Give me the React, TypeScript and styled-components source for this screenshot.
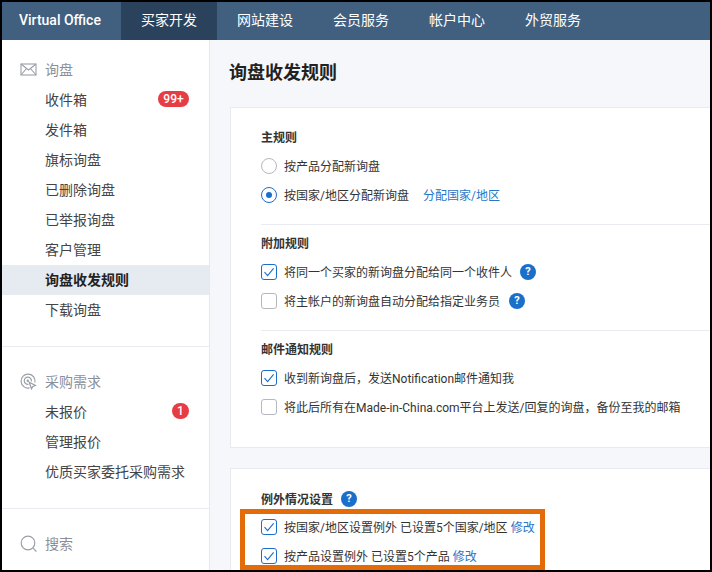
import React from "react";
import styled, { createGlobalStyle } from "styled-components";

const GlobalStyle = createGlobalStyle`
  html, body {
    margin: 0;
    padding: 0;
    background: #000;
  }
  body {
    font-family: Roboto, "Noto Sans CJK SC", sans-serif;
    color: #333;
  }
`;

const Frame = styled.div`
  width: 712px;
  height: 572px;
  box-sizing: border-box;
  border: 2px solid #000;
  overflow: hidden;
  display: flex;
  flex-direction: column;
  background: #f5f7fb;
`;

const TopBar = styled.div`
  height: 38px;
  flex: none;
  display: flex;
  background: #41607f;
`;

const Brand = styled.div`
  width: 119px;
  padding-left: 17px;
  box-sizing: border-box;
  font-size: 14px;
  font-weight: 500;
  line-height: 36px;
  color: #fff;
`;

const NavItem = styled.div<{ $active?: boolean }>`
  padding: 0 20px;
  font-size: 14px;
  line-height: 36px;
  color: #fff;
  background: ${(p) => (p.$active ? "#2b425c" : "transparent")};
`;

const Body = styled.div`
  flex: 1;
  min-height: 0;
  display: flex;
`;

const Sidebar = styled.div`
  width: 207px;
  flex: none;
  background: #fff;
  border-right: 1px solid #e6e8ef;
`;

const SideGroup = styled.div<{ $top: number; $bottom: number }>`
  padding: ${(p) => p.$top}px 0 ${(p) => p.$bottom}px;
  border-bottom: 1px solid #e9ebf0;

  &:last-child {
    border-bottom: none;
  }
`;

const GroupHead = styled.div`
  height: 30px;
  box-sizing: border-box;
  display: flex;
  align-items: center;
  padding: 0 0 2px 18px;
  gap: 8px;
  font-size: 14px;
  color: #8a8f99;

  svg {
    width: 17px;
    height: 17px;
    flex: none;
    color: #9a9ea6;
  }
`;

const SideItem = styled.div<{ $active?: boolean }>`
  height: 30px;
  box-sizing: border-box;
  display: flex;
  align-items: center;
  justify-content: space-between;
  padding: 0 20px 2px 43px;
  font-size: 14px;
  color: ${(p) => (p.$active ? "#222" : "#444")};
  font-weight: ${(p) => (p.$active ? 700 : 400)};
  background: ${(p) => (p.$active ? "#e6ebf1" : "transparent")};
`;

const Badge = styled.span<{ $wide?: boolean }>`
  width: ${(p) => (p.$wide ? "31px" : "17px")};
  height: 16px;
  border-radius: 9px;
  background: #e63c44;
  color: #fff;
  font-size: 12px;
  font-weight: 500;
  line-height: 16px;
  text-align: center;
`;

const Main = styled.div`
  flex: 1;
  min-width: 0;
  padding-left: 20px;
`;

const Title = styled.h1`
  margin: 0 0 0 -1px;
  height: 67px;
  font-size: 18px;
  font-weight: 700;
  line-height: 65px;
  color: #222;
`;

const Card = styled.div`
  background: #fff;
  border: 1px solid #e8eaf0;
  border-right: none;
  padding-left: 30px;
  margin-bottom: 20px;
`;

const Section = styled.div<{ $top: number; $bottom: number }>`
  padding: ${(p) => p.$top}px 0 ${(p) => p.$bottom}px;
  border-bottom: 1px solid #e9ebf0;

  &:last-child {
    border-bottom: none;
  }
`;

const SectionTitle = styled.div`
  display: flex;
  align-items: center;
  gap: 8px;
  height: 29px;
  font-size: 12px;
  font-weight: 700;
  color: #333;
`;

const Row = styled.div`
  height: 29px;
  display: flex;
  align-items: center;
  font-size: 12px;
  color: #333;
  white-space: nowrap;
`;

const Radio = styled.span<{ $on?: boolean }>`
  width: 16px;
  height: 16px;
  box-sizing: border-box;
  margin-right: 7px;
  border-radius: 50%;
  border: 1px solid ${(p) => (p.$on ? "#1a6fc9" : "#b5b8bf")};
  display: flex;
  align-items: center;
  justify-content: center;
  flex: none;

  &::after {
    content: "";
    display: ${(p) => (p.$on ? "block" : "none")};
    width: 6px;
    height: 6px;
    border-radius: 50%;
    background: #1a6fc9;
  }
`;

const CheckBox = styled.span<{ $on?: boolean }>`
  width: 16px;
  height: 16px;
  box-sizing: border-box;
  margin-right: 7px;
  border-radius: 3px;
  border: 1px solid ${(p) => (p.$on ? "#1a6fc9" : "#b5b8bf")};
  display: flex;
  align-items: center;
  justify-content: center;
  flex: none;

  svg {
    width: 12px;
    height: 12px;
    color: #1a6fc9;
  }
`;

const TextLink = styled.a<{ $gap: number }>`
  margin-left: ${(p) => p.$gap}px;
  color: #2a75c7;
`;

const Help = styled.span<{ $gap: number }>`
  width: 16px;
  height: 16px;
  flex: none;
  margin-left: ${(p) => p.$gap}px;
  border-radius: 50%;
  background: #1a6fc9;
  color: #fff;
  font-size: 11px;
  font-weight: 700;
  line-height: 16px;
  text-align: center;
`;

const Highlight = styled.div`
  margin: -4px 0 0 -21px;
  width: 305px;
  height: 61px;
  box-sizing: border-box;
  border: 5px solid #e36c09;
  padding-left: 16px;

  & > :first-child {
    margin-top: -2px;
  }
`;

const Check = () => (
  <svg viewBox="0 0 12 12" fill="none" stroke="currentColor" strokeWidth="1.1">
    <path d="M1.5 6.2 4.6 9.6 10.6 2.4" />
  </svg>
);

const MailIcon = () => (
  <svg viewBox="0 0 17 17" fill="none" stroke="currentColor" strokeWidth="1.1">
    <rect x="1" y="3" width="15" height="11" />
    <path d="M1 3l7.5 6L16 3M1 14l5.5-6.5M16 14l-5.5-6.5" />
  </svg>
);

const TargetIcon = () => (
  <svg viewBox="0 0 17 17" fill="none" stroke="currentColor" strokeWidth="1.2">
    <path d="M9.5 14.9A7 7 0 1 1 14.9 9.5" />
    <path d="M8.4 11.3A3.6 3.6 0 1 1 11.4 8.4" />
    <circle cx="7.8" cy="7.8" r="1.2" fill="currentColor" stroke="none" />
    <path d="M9.2 9.2l2.3 6.6 1.3-2.4 2.6-.9z" fill="#fff" />
  </svg>
);

const SearchIcon = () => (
  <svg viewBox="0 0 17 17" fill="none" stroke="currentColor" strokeWidth="1.2">
    <circle cx="8" cy="8" r="6.8" />
    <path d="M12.9 12.9 16.4 16.6" />
  </svg>
);

const navItems = ["网站建设", "会员服务", "帐户中心", "外贸服务"];
const inquiryItems = ["发件箱", "旗标询盘", "已删除询盘", "已举报询盘", "客户管理"];

export default function App() {
  return (
    <>
      <GlobalStyle />
      <Frame>
        <TopBar>
          <Brand>Virtual Office</Brand>
          <NavItem $active>买家开发</NavItem>
          {navItems.map((item) => (
            <NavItem key={item}>{item}</NavItem>
          ))}
        </TopBar>
        <Body>
          <Sidebar>
            <SideGroup $top={15} $bottom={21}>
              <GroupHead>
                <MailIcon />
                询盘
              </GroupHead>
              <SideItem>
                收件箱
                <Badge $wide>99+</Badge>
              </SideItem>
              {inquiryItems.map((item) => (
                <SideItem key={item}>{item}</SideItem>
              ))}
              <SideItem $active>询盘收发规则</SideItem>
              <SideItem>下载询盘</SideItem>
            </SideGroup>
            <SideGroup $top={20} $bottom={21}>
              <GroupHead>
                <TargetIcon />
                采购需求
              </GroupHead>
              <SideItem>
                未报价
                <Badge>1</Badge>
              </SideItem>
              <SideItem>管理报价</SideItem>
              <SideItem>优质买家委托采购需求</SideItem>
            </SideGroup>
            <SideGroup $top={20} $bottom={0}>
              <GroupHead>
                <SearchIcon />
                搜索
              </GroupHead>
            </SideGroup>
          </Sidebar>
          <Main>
            <Title>询盘收发规则</Title>
            <Card>
              <Section $top={14} $bottom={15}>
                <SectionTitle>主规则</SectionTitle>
                <Row>
                  <Radio />
                  按产品分配新询盘
                </Row>
                <Row>
                  <Radio $on />
                  按国家/地区分配新询盘
                  <TextLink $gap={14}>分配国家/地区</TextLink>
                </Row>
              </Section>
              <Section $top={3} $bottom={15}>
                <SectionTitle>附加规则</SectionTitle>
                <Row>
                  <CheckBox $on>
                    <Check />
                  </CheckBox>
                  将同一个买家的新询盘分配给同一个收件人
                  <Help $gap={8}>?</Help>
                </Row>
                <Row>
                  <CheckBox />
                  将主帐户的新询盘自动分配给指定业务员
                  <Help $gap={9}>?</Help>
                </Row>
              </Section>
              <Section $top={3} $bottom={26}>
                <SectionTitle>邮件通知规则</SectionTitle>
                <Row>
                  <CheckBox $on>
                    <Check />
                  </CheckBox>
                  收到新询盘后，发送Notification邮件通知我
                </Row>
                <Row>
                  <CheckBox />
                  将此后所有在Made-in-China.com平台上发送/回复的询盘，备份至我的邮箱
                </Row>
              </Section>
            </Card>
            <Card>
              <Section $top={15} $bottom={0}>
                <SectionTitle>
                  例外情况设置
                  <Help $gap={0}>?</Help>
                </SectionTitle>
                <Highlight>
                  <Row>
                    <CheckBox $on>
                      <Check />
                    </CheckBox>
                    按国家/地区设置例外 已设置5个国家/地区
                    <TextLink $gap={3}>修改</TextLink>
                  </Row>
                  <Row>
                    <CheckBox $on>
                      <Check />
                    </CheckBox>
                    按产品设置例外 已设置5个产品
                    <TextLink $gap={3}>修改</TextLink>
                  </Row>
                </Highlight>
              </Section>
            </Card>
          </Main>
        </Body>
      </Frame>
    </>
  );
}
